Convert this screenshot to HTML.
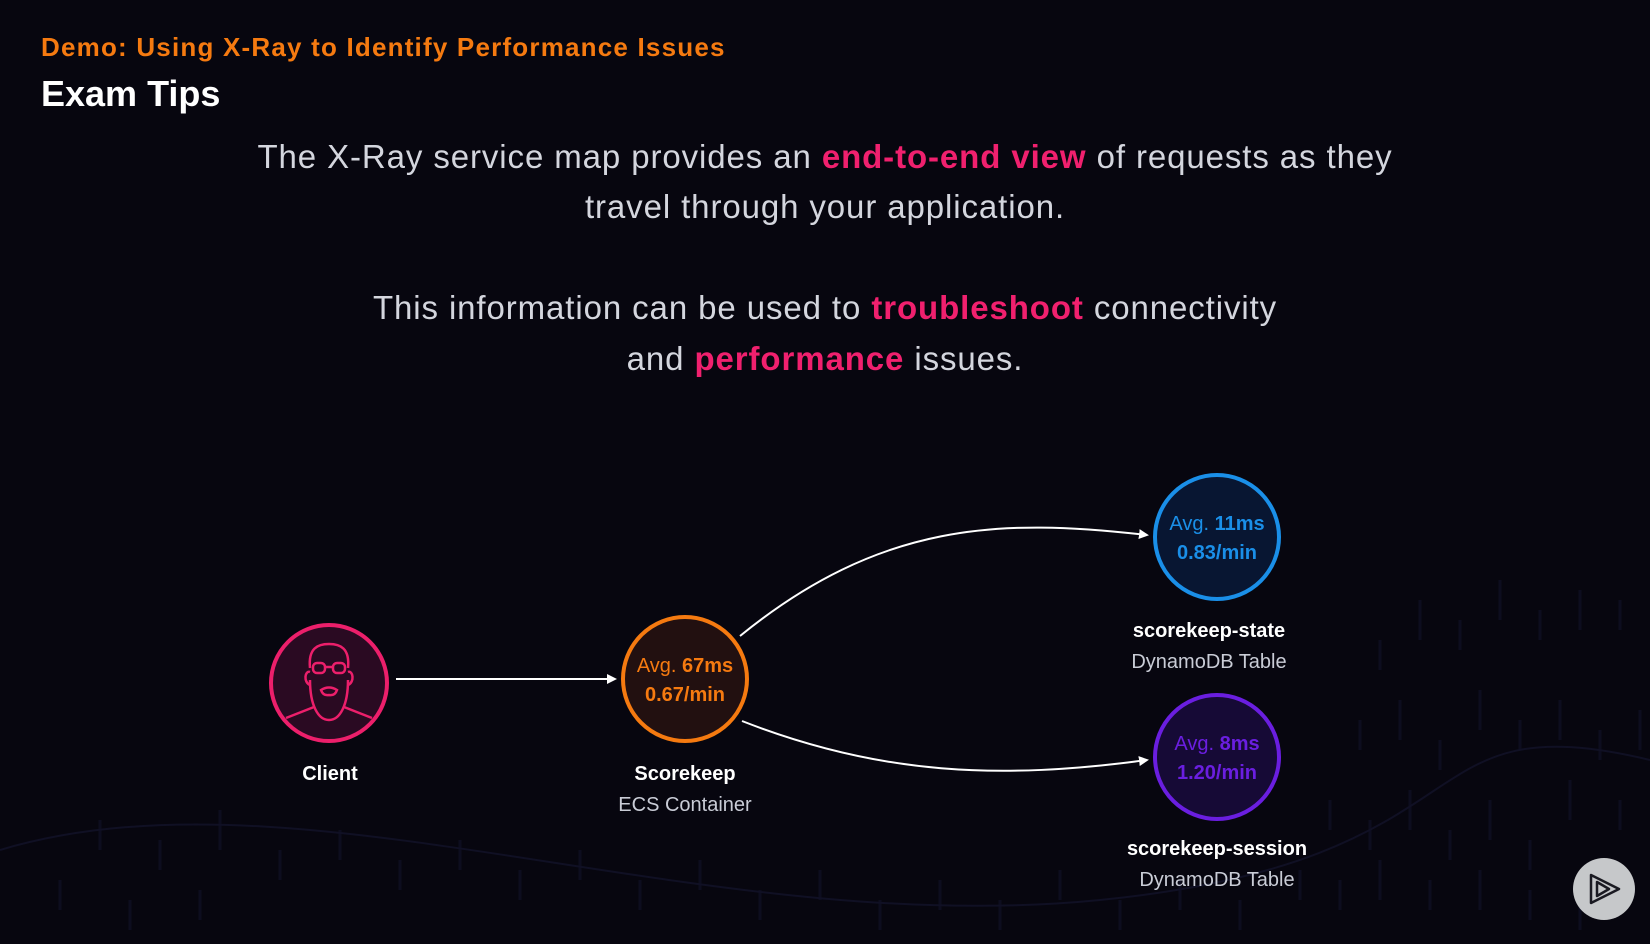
<!DOCTYPE html>
<html><head><meta charset="utf-8"><style>
html,body{margin:0;padding:0;background:#07060f;width:1650px;height:944px;overflow:hidden}
body{position:relative;font-family:"Liberation Sans",sans-serif}
.t{position:absolute;white-space:nowrap}
.c{left:0;width:1650px;text-align:center}
.p{font-size:33px;color:#d4d6de;letter-spacing:0.9px}
.h{color:#f0206e;font-weight:bold}
.lb{font-size:20px;color:#fff;font-weight:bold;text-align:center;width:300px}
.sb{font-size:20px;color:#c9ccd6;text-align:center;width:300px}
</style></head><body>
<div class="t" style="left:41px;top:32px;font-size:26px;font-weight:bold;color:#f57a10;letter-spacing:1.2px">Demo: Using X-Ray to Identify Performance Issues</div>
<div class="t" style="left:41px;top:73px;font-size:36px;font-weight:bold;color:#fff">Exam Tips</div>
<div class="t c p" style="top:138px">The X-Ray service map provides an <span class="h">end-to-end view</span> of requests as they</div>
<div class="t c p" style="top:188px">travel through your application.</div>
<div class="t c p" style="top:289px">This information can be used to <span class="h">troubleshoot</span> connectivity</div>
<div class="t c p" style="top:340px">and <span class="h">performance</span> issues.</div>

<svg width="1650" height="944" style="position:absolute;left:0;top:0">
<defs><marker id="a" markerWidth="10" markerHeight="10" refX="8" refY="5" orient="auto" markerUnits="userSpaceOnUse"><path d="M0,0 L10,5 L0,10z" fill="#fff"/></marker></defs>
<g stroke="#12122a" stroke-width="3" opacity="0.6">
<path d="M1380 640v30M1420 600v40M1460 620v30M1500 580v40M1540 610v30M1580 590v40M1620 600v30M1360 720v30M1400 700v40M1440 740v30M1480 690v40M1520 720v30M1560 700v40M1600 730v30M1640 710v40M1330 800v30M1370 820v30M1410 790v40M1450 830v30M1490 800v40M1530 840v30M1570 780v40M1620 800v30M1300 870v30M1340 880v30M1380 860v40M1430 880v30M1480 870v40M1530 890v30M1580 900v30M100 820v30M160 840v30M220 810v40M280 850v30M340 830v30M400 860v30M460 840v30M520 870v30M580 850v30M640 880v30M700 860v30M760 890v30M820 870v30M880 900v30M940 880v30M1000 900v30M1060 870v30M1120 900v30M1180 880v30M1240 900v30M60 880v30M130 900v30M200 890v30"/>
</g>
<path d="M0 850 C300 760 700 940 1100 900 S1400 700 1650 760" stroke="#101024" stroke-width="2" fill="none"/>
<line x1="396" y1="679" x2="615" y2="679" stroke="#fff" stroke-width="2" marker-end="url(#a)"/>
<path d="M740 636 C880 522 1000 518 1147 535" stroke="#fff" stroke-width="2" fill="none" marker-end="url(#a)"/>
<path d="M742 721 C880 775 1000 780 1147 760" stroke="#fff" stroke-width="2" fill="none" marker-end="url(#a)"/>
<circle cx="329" cy="683" r="58" fill="#2a0a22" stroke="#ec1f6b" stroke-width="4"/>
<g stroke="#ec1f6b" stroke-width="2.5" fill="none">
<path d="M310 668 C308 648 318 644 329 644 C340 644 350 648 348 668"/>
<path d="M310 672 c-5 -2 -7 10 0 13 M348 672 c5 -2 7 10 0 13"/>
<path d="M310 680 C310 705 318 720 329 720 C340 720 348 705 348 680"/>
<rect x="313" y="663" width="12" height="10" rx="4"/><rect x="333" y="663" width="12" height="10" rx="4"/><path d="M325 667h8"/>
<path d="M321 690 q8 -5 16 0 q-2 6 -8 5 q-6 1 -8 -5z"/>
<path d="M286 718 L314 707 M372 718 L344 707"/>
</g>
<circle cx="685" cy="679" r="62" fill="#221010" stroke="#f57a10" stroke-width="4"/>
<circle cx="1217" cy="537" r="62" fill="#081632" stroke="#1a8fe8" stroke-width="4"/>
<circle cx="1217" cy="757" r="62" fill="#160a36" stroke="#6a1ee0" stroke-width="4"/>
<circle cx="1604" cy="889" r="31" fill="#c6c8ca"/>
<g stroke="#1a1a22" stroke-width="2.5" fill="none" stroke-linejoin="round">
<path d="M1591 875 L1619 889 L1591 903z"/><path d="M1597 882 L1609 889 L1597 896z"/>
</g>
</svg>

<div class="t" style="left:625px;top:652px;width:120px;text-align:center;font-size:20px;color:#f57a10;line-height:29px">Avg. <b>67ms</b><br><b>0.67/min</b></div>
<div class="t" style="left:1157px;top:510px;width:120px;text-align:center;font-size:20px;color:#1a8fe8;line-height:29px">Avg. <b>11ms</b><br><b>0.83/min</b></div>
<div class="t" style="left:1157px;top:730px;width:120px;text-align:center;font-size:20px;color:#6a1ee0;line-height:29px">Avg. <b>8ms</b><br><b>1.20/min</b></div>

<div class="t lb" style="left:180px;top:763px">Client</div>
<div class="t lb" style="left:535px;top:763px">Scorekeep</div>
<div class="t sb" style="left:535px;top:794px">ECS Container</div>
<div class="t lb" style="left:1059px;top:620px">scorekeep-state</div>
<div class="t sb" style="left:1059px;top:651px">DynamoDB Table</div>
<div class="t lb" style="left:1067px;top:838px">scorekeep-session</div>
<div class="t sb" style="left:1067px;top:869px">DynamoDB Table</div>
</body></html>
